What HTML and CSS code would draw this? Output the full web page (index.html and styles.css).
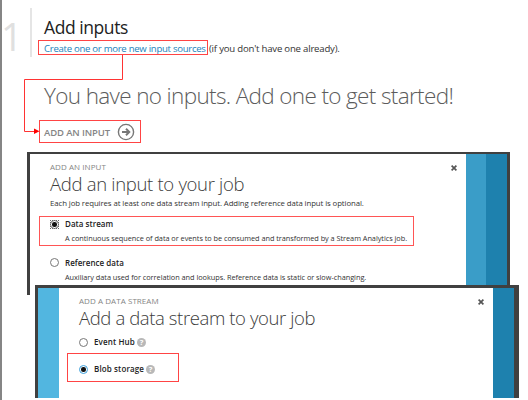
FILE: index.html
```html
<!DOCTYPE html>
<html lang="en">
<head>
<meta charset="utf-8">
<title>Add inputs</title>
<link rel="stylesheet" href="styles.css">
</head>
<body>
<main class="page">
  <section class="step">
    <div class="step-number">1</div>
    <div class="step-body">
      <h1>Add inputs</h1>
      <p class="intro"><a class="link">Create one or more new input sources</a><span class="note">(if you don't have one already).</span></p>
    </div>
  </section>
  <p class="empty">You have no inputs. Add one to get started!</p>
  <button class="add">
    <span>ADD AN INPUT</span>
    <svg width="18" height="18" viewBox="0 0 18 18" fill="none" stroke="#777"><circle cx="9" cy="9" r="7.6" stroke-width="1.4"/><path d="M5 9h7M9 5.8 12.3 9 9 12.2" stroke-width="1.9"/></svg>
  </button>

  <section class="dialog dialog-input">
    <div class="panel">
      <svg class="close" viewBox="0 0 6 6"><path d="M.6.6l4.8 4.8M5.4.6.6 5.4"/></svg>
      <div class="eyebrow">ADD AN INPUT</div>
      <h2 class="title-input">Add an input to your job</h2>
      <p class="desc">Each job requires at least one data stream input. Adding reference data input is optional.</p>
      <div class="option option-stream">
        <span class="radio checked focus"></span>
        <div><div class="label">Data stream</div><p class="hint">A continuous sequence of data or events to be consumed and transformed by a Stream Analytics job.</p></div>
      </div>
      <div class="option option-reference">
        <span class="radio"></span>
        <div><div class="label">Reference data</div><p class="hint">Auxiliary data used for correlation and lookups. Reference data is static or slow-changing.</p></div>
      </div>
    </div>
    <div class="stripe mid"></div>
    <div class="stripe deep"></div>
  </section>

  <section class="dialog dialog-stream">
    <div class="stripe sky"></div>
    <div class="panel">
      <svg class="close" viewBox="0 0 6 6"><path d="M.6.6l4.8 4.8M5.4.6.6 5.4"/></svg>
      <div class="eyebrow">ADD A DATA STREAM</div>
      <h2 class="title-stream">Add a data stream to your job</h2>
      <div class="choice choice-hub"><span class="radio"></span><span class="label wide">Event Hub</span><span class="help">?</span></div>
      <div class="choice choice-blob"><span class="radio checked hot"></span><span class="label wide">Blob storage</span><span class="help">?</span></div>
    </div>
    <div class="stripe deep"></div>
  </section>

  <svg class="connector" width="528" height="400"><path d="M122.5 55v24.5H24.5v52H36" fill="none" stroke="#f33"/><path d="M34 128.6l5.5 2.7-5.5 2.7z" fill="red"/></svg>
</main>
</body>
</html>
```
FILE: styles.css
```css
* { box-sizing: border-box; }
body { margin: 0; background: #fff; font-family: "Open Sans", "Noto Sans", sans-serif; color: #333; }
h1, h2, p { margin: 0; font-weight: 400; white-space: nowrap; }
.page { position: relative; width: 528px; height: 400px; overflow: hidden; border-left: 2px solid #858585; }

.step { display: flex; padding-top: 8px; height: 58px; }
.step-number { width: 30px; height: 49px; border-right: 2px solid #e5e5e5; font-size: 38px; line-height: 56px; font-weight: 400; color: #e0e0e0; text-indent: -1px; }
.step-body { padding: 7px 0 0 6px; }
h1 { font-size: 17.5px; line-height: 25px; letter-spacing: -.43px; padding-left: 6px; color: #222; }
.intro { display: flex; font-size: 9.6px; line-height: 15px; letter-spacing: -.29px; }
.link { width: 170px; height: 15px; padding-left: 5px; border: 1px solid #f44; color: #1b82bc; }
.note { padding: 1px 0 0 1px; letter-spacing: -.21px; }
.empty { margin: 23px 0 0 42px; font-size: 22.5px; line-height: 30px; font-weight: 300; letter-spacing: -.64px; color: #5c5c5c; }
.add { display: flex; align-items: center; gap: 7px; width: 102px; height: 23px; margin: 9px 0 0 37px; padding: 0 0 0 4px; border: 1px solid #f44; background: none; font: 600 9.5px/20px "Open Sans", sans-serif; letter-spacing: -.12px; color: #858585; white-space: nowrap; }
.add span { padding-top: 2px; }
.add svg { flex: none; }

.dialog { position: relative; display: flex; }
.dialog-input { width: 483px; height: 143px; margin: 9px 0 0 25px; border: solid #404040; border-width: 2px 3px 0; }
.dialog-stream { width: 484px; height: 113px; margin: -10px 0 0 33px; border: solid #404040; border-width: 3px 5px 0 3px; background: #fff; }
.panel { position: relative; flex: 1; background: #fff; }
.stripe { width: 21px; }
.sky { background: #52b6e0; }
.mid { width: 20px; background: #3a9dc8; }
.deep { background: #1e81ae; }
.close { position: absolute; top: 11px; right: 9px; width: 6px; height: 6px; stroke: #555; stroke-width: 1.7; }

.eyebrow { padding: 8px 0 0 20px; font-size: 8px; line-height: 10px; letter-spacing: .06px; color: #858585; }
h2 { padding-left: 20px; font-size: 18.5px; line-height: 24px; font-weight: 300; color: #3c3c3c; }
.title-input { letter-spacing: -.31px; }
.title-stream { letter-spacing: -.39px; }
.desc { padding: 1px 0 0 20px; font-size: 7.8px; line-height: 13px; letter-spacing: -.09px; }
.option { display: flex; gap: 6px; padding-left: 10px; }
.option-stream { width: 375px; height: 30px; margin: 6px 0 0 9px; border: 1px solid #f55; }
.option-reference { margin: 9px 0 0 10px; }
.label { font-size: 8px; line-height: 14px; font-weight: 600; letter-spacing: .03px; color: #222; }
.option-reference .label { padding-top: 1px; }
.label.wide { letter-spacing: .13px; }
.hint { font-size: 7.35px; line-height: 15px; letter-spacing: -.04px; }
.radio { flex: none; position: relative; width: 9px; height: 9px; margin-top: 3px; border: 1px solid #777; border-radius: 50%; background: #fff; }
.checked::after { content: ""; position: absolute; inset: 1.25px; border-radius: 50%; background: #111; }
.focus::before { content: ""; position: absolute; inset: -1px; border: 1px dotted #666; }
.hot { border-color: #3ba0dc; }

.choice { display: flex; gap: 6px; height: 29px; padding-left: 20px; }
.choice-hub { margin-top: 5px; height: 14px; }
.choice-blob { width: 112px; margin: 4px 0 0 8px; padding: 8px 0 0 11px; border: 1px solid #f44; }
.help { width: 9px; height: 9px; margin: 3px 0 0 -4px; border-radius: 50%; background: #b8b8b8; color: #fff; font-size: 7.5px; font-weight: 700; line-height: 9px; text-align: center; }
.connector { position: absolute; left: -2px; top: 0; pointer-events: none; }
```
